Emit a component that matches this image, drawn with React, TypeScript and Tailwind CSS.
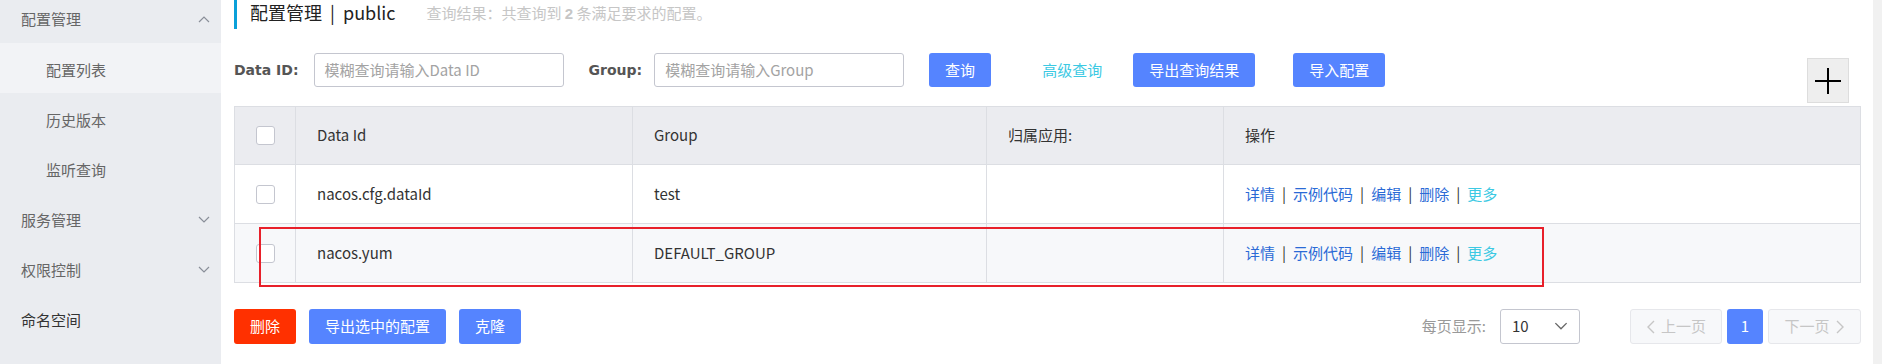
import React from "react";

const ChevronUp = () => (
  <svg width="12" height="8" viewBox="0 0 12 8" fill="none">
    <polyline points="1,7 6,2 11,7" stroke="#8a8f99" strokeWidth="1.2" />
  </svg>
);
const ChevronDown = ({ color = "#8a8f99", w = 12, h = 8 }: { color?: string; w?: number; h?: number }) => (
  <svg width={w} height={h} viewBox="0 0 12 8" fill="none">
    <polyline points="1,1 6,6 11,1" stroke={color} strokeWidth="1.2" />
  </svg>
);

const Checkbox = () => (
  <div className="w-[19px] h-[19px] rounded-[3px] border border-[#c4c6cf] bg-white" />
);

const Actions = () => (
  <div className="flex items-center text-[15px] text-[#2a6ad6]">
    <span>详情</span>
    <span className="mx-[7px] text-[#333]">|</span>
    <span>示例代码</span>
    <span className="mx-[7px] text-[#333]">|</span>
    <span>编辑</span>
    <span className="mx-[7px] text-[#333]">|</span>
    <span>删除</span>
    <span className="mx-[7px] text-[#333]">|</span>
    <span className="text-[#3cc9e3]">更多</span>
  </div>
);

const cell = "flex items-center border-r border-[#dcdee3] pl-[21px]";

export default function App() {
  return (
    <div
      className="flex w-[1882px] h-[364px] overflow-hidden bg-white text-[#333]"
      style={{ fontFamily: '"Noto Sans CJK SC", "Noto Sans", sans-serif' }}
    >
      {/* Sidebar */}
      <aside className="w-[221px] shrink-0 bg-[#eaecf0] text-[15px] text-[#666]">
        <div className="h-[43px] flex items-center justify-between pl-[21px] pr-[11px] pb-[5px]">
          <span>配置管理</span>
          <ChevronUp />
        </div>
        <div className="h-[50px] flex items-center pl-[46px] bg-[#f2f3f6] pt-[4px]">配置列表</div>
        <div className="h-[50px] flex items-center pl-[46px] pt-[4px]">历史版本</div>
        <div className="h-[50px] flex items-center pl-[46px] pt-[4px]">监听查询</div>
        <div className="h-[50px] flex items-center justify-between pl-[21px] pr-[11px] pt-[4px]">
          <span>服务管理</span>
          <ChevronDown />
        </div>
        <div className="h-[50px] flex items-center justify-between pl-[21px] pr-[11px] pt-[4px]">
          <span>权限控制</span>
          <ChevronDown />
        </div>
        <div className="h-[50px] flex items-center pl-[21px] pt-[4px] text-[#333]">命名空间</div>
      </aside>

      {/* Main */}
      <main className="relative flex-1 pl-[13px] pr-[12px]">
        {/* Header */}
        <div className="flex items-start">
          <div className="w-[3px] h-[29px] bg-[#0aa0d9]" />
          <div className="ml-[13px] pt-[1px] text-[18px] leading-[22px] text-[#222]">
            配置管理 &nbsp;|&nbsp; public
          </div>
          <div className="ml-[31px] mt-[2px] text-[15px] leading-[22px] text-[#c6c6c6]">
            查询结果：共查询到 <span className="font-bold" style={{ fontFamily: '"Liberation Sans", sans-serif' }}>2</span> 条满足要求的配置。
          </div>
        </div>

        {/* Search row */}
        <div className="flex items-start mt-[24px]">
          <div
            className="h-[34px] flex items-center text-[14px] font-bold text-[#555]"
            style={{ fontFamily: '"DejaVu Sans", sans-serif' }}
          >
            Data ID:
          </div>
          <div className="ml-[15px] w-[250px] h-[34px] rounded-[3px] border border-[#c4c6cf] flex items-center pl-[10px] text-[15px] text-[#a3a3a3]">
            模糊查询请输入Data ID
          </div>
          <div
            className="ml-[25px] h-[34px] flex items-center text-[14px] font-bold text-[#555]"
            style={{ fontFamily: '"DejaVu Sans", sans-serif' }}
          >
            Group:
          </div>
          <div className="ml-[12px] w-[250px] h-[34px] rounded-[3px] border border-[#c4c6cf] flex items-center pl-[10px] text-[15px] text-[#a3a3a3]">
            模糊查询请输入Group
          </div>
          <div className="ml-[25px] w-[62px] h-[34px] rounded-[3px] bg-[#5584ff] text-white text-[15px] flex items-center justify-center">
            查询
          </div>
          <div className="ml-[51px] h-[34px] flex items-center text-[15px] text-[#3cc9e3]">高级查询</div>
          <div className="ml-[31px] w-[122px] h-[34px] rounded-[3px] bg-[#5584ff] text-white text-[15px] flex items-center justify-center">
            导出查询结果
          </div>
          <div className="ml-[38px] w-[92px] h-[34px] rounded-[3px] bg-[#5584ff] text-white text-[15px] flex items-center justify-center">
            导入配置
          </div>
          <div className="ml-auto mr-[12px] mt-[5px] w-[42px] h-[45px] bg-[#eeeeee] border border-[#dddddd] flex items-center justify-center">
            <svg width="26" height="26" viewBox="0 0 26 26">
              <rect x="0" y="12" width="26" height="2" fill="#000" />
              <rect x="12" y="0" width="2" height="26" fill="#000" />
            </svg>
          </div>
        </div>

        {/* Table */}
        <div className="mt-[3px] border border-[#dcdee3] text-[15px] text-[#333]">
          <div className="grid grid-cols-[61px_337px_354px_237px_1fr] h-[58px] bg-[#ebecf0] border-b border-[#dcdee3]">
            <div className="flex items-center justify-center border-r border-[#dcdee3]">
              <Checkbox />
            </div>
            <div className={cell}>Data Id</div>
            <div className={cell}>Group</div>
            <div className={cell}>归属应用:</div>
            <div className="flex items-center pl-[21px]">操作</div>
          </div>
          <div className="grid grid-cols-[61px_337px_354px_237px_1fr] h-[59px] bg-white border-b border-[#dcdee3]">
            <div className="flex items-center justify-center border-r border-[#dcdee3]">
              <Checkbox />
            </div>
            <div className={cell}>nacos.cfg.dataId</div>
            <div className={cell}>test</div>
            <div className={cell}></div>
            <div className="flex items-center pl-[21px]">
              <Actions />
            </div>
          </div>
          <div className="grid grid-cols-[61px_337px_354px_237px_1fr] h-[58px] bg-[#f7f8fa]">
            <div className="flex items-center justify-center border-r border-[#dcdee3]">
              <Checkbox />
            </div>
            <div className={cell}>nacos.yum</div>
            <div className={cell}>DEFAULT_GROUP</div>
            <div className={cell}></div>
            <div className="flex items-center pl-[21px]">
              <Actions />
            </div>
          </div>
        </div>

        {/* Bottom row */}
        <div className="flex items-center mt-[26px] text-[15px]">
          <div className="w-[62px] h-[35px] rounded-[3px] bg-[#ff3000] text-white flex items-center justify-center">删除</div>
          <div className="ml-[13px] w-[137px] h-[35px] rounded-[3px] bg-[#5584ff] text-white flex items-center justify-center">
            导出选中的配置
          </div>
          <div className="ml-[13px] w-[62px] h-[35px] rounded-[3px] bg-[#5584ff] text-white flex items-center justify-center">克隆</div>

          <div className="ml-auto flex items-center">
            <span className="text-[#999]">每页显示:</span>
            <div className="ml-[14px] w-[80px] h-[35px] rounded-[3px] border border-[#c4c6cf] flex items-center justify-between pl-[11px] pr-[11px] text-[#333]">
              <span>10</span>
              <ChevronDown color="#666" w={14} h={9} />
            </div>
            <div className="ml-[50px] w-[92px] h-[35px] rounded-[3px] border border-[#e6e7eb] bg-[#f7f8fa] flex items-center justify-center text-[#c6c6c6]">
              <svg width="9" height="14" viewBox="0 0 9 14" fill="none" className="mr-[6px]">
                <polyline points="8,1 2,7 8,13" stroke="#c6c6c6" strokeWidth="1.4" />
              </svg>
              上一页
            </div>
            <div className="ml-[5px] w-[36px] h-[35px] rounded-[3px] bg-[#5584ff] text-white flex items-center justify-center">1</div>
            <div className="ml-[5px] w-[93px] h-[35px] rounded-[3px] border border-[#e6e7eb] bg-[#f7f8fa] flex items-center justify-center text-[#c6c6c6]">
              下一页
              <svg width="9" height="14" viewBox="0 0 9 14" fill="none" className="ml-[6px]">
                <polyline points="1,1 7,7 1,13" stroke="#c6c6c6" strokeWidth="1.4" />
              </svg>
            </div>
          </div>
        </div>

        {/* Annotation overlay */}
        <div className="absolute left-[38px] top-[227px] w-[1285px] h-[60px] border-2 border-[#e8202a] pointer-events-none" />
      </main>

      {/* Scrollbar track */}
      <div className="w-[9px] shrink-0 bg-[#f1f1f1]" />
    </div>
  );
}
